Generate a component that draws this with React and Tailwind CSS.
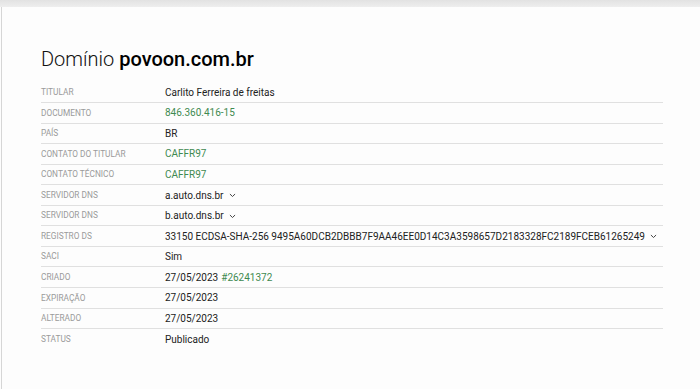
import React from 'react';

const rows = [
  { label: 'Titular', value: 'Carlito Ferreira de freitas' },
  { label: 'Documento', value: '846.360.416-15', green: true },
  { label: 'País', value: 'BR' },
  { label: 'Contato do titular', value: 'CAFFR97', green: true },
  { label: 'Contato técnico', value: 'CAFFR97', green: true },
  { label: 'Servidor DNS', value: 'a.auto.dns.br', chevron: true },
  { label: 'Servidor DNS', value: 'b.auto.dns.br', chevron: true },
  {
    label: 'Registro DS',
    value: '33150 ECDSA-SHA-256 9495A60DCB2DBBB7F9AA46EE0D14C3A3598657D2183328FC2189FCEB61265249',
    chevron: true,
  },
  { label: 'SACI', value: 'Sim' },
  { label: 'Criado', value: '27/05/2023', ticket: '#26241372' },
  { label: 'Expiração', value: '27/05/2023' },
  { label: 'Alterado', value: '27/05/2023' },
  { label: 'Status', value: 'Publicado' },
];

function Chevron() {
  return (
    <svg width="7" height="5" viewBox="0 0 7 5" className="ml-[5px] mt-[1px]" fill="none">
      <path d="M1.2 1.3 L3.5 3.5 L5.8 1.3" stroke="#444" strokeWidth="1" strokeLinecap="round" strokeLinejoin="round" />
    </svg>
  );
}

export default function App() {
  return (
    <div className="w-[700px] h-[389px] overflow-hidden bg-[#fdfdfd] font-['Roboto',sans-serif] flex flex-col">
      {/* blurred header strip */}
      <div className="h-[7px] shrink-0 bg-gradient-to-b from-[#e2e2e2] to-[#eeeeee]" />

      <div className="flex-1 border-l border-[#d6d6d6] ml-[1px] pl-[39px] pr-[37px]">
        <h1 className="mt-[40px] text-[20px] leading-[25px] text-[#111]">
          <span className="font-light">Domínio</span>{' '}
          <span className="font-medium text-black">povoon.com.br</span>
        </h1>

        <div className="mt-[10.5px]">
          {rows.map((row, i) => (
            <div
              key={i}
              className={`flex items-center h-[20.55px] ${i < rows.length - 1 ? 'border-b border-[#e0e0e0]' : ''}`}
            >
              <div className="w-[124px] shrink-0 text-[8.3px] uppercase text-[#9a9a9a]">
                {row.label}
              </div>
              <div className="flex items-center text-[10px] text-[#222] whitespace-nowrap">
                <span className={row.green ? 'text-[#3f8a50]' : ''}>{row.value}</span>
                {row.ticket && <span className="ml-[3px] text-[#3f8a50]">{row.ticket}</span>}
                {row.chevron && <Chevron />}
              </div>
            </div>
          ))}
        </div>
      </div>
    </div>
  );
}
